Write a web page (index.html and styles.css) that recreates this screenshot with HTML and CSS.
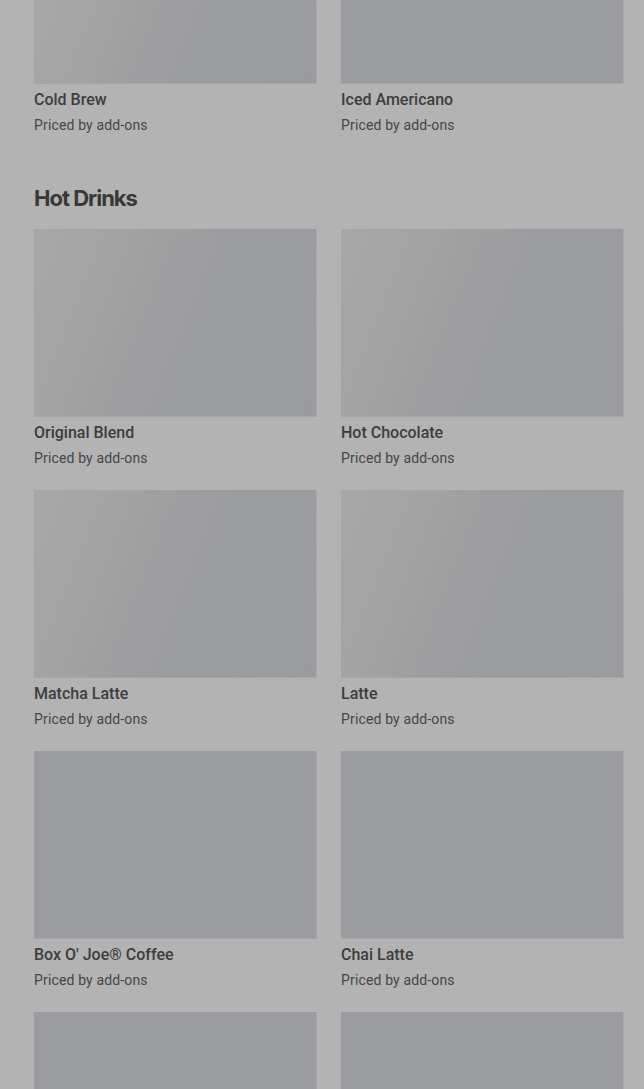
FILE: index.html
```html
<!DOCTYPE html>
<html lang="en">
  <head>
    <meta charset="UTF-8" />
    <meta name="viewport" content="width=device-width,initial-scale=1.0" />
    <title>Menu</title>
    <link rel="stylesheet" href="styles.css">
  </head>
  <body>
    <div class="menu">
      <section class="category">
        <div class="item-grid">
          <div class="item">
            <div class="item-img item-img--cut shimmer"></div>
            <h3>Cold Brew</h3>
            <p>Priced by add-ons</p>
          </div>
          <div class="item">
            <div class="item-img item-img--cut"></div>
            <h3>Iced Americano</h3>
            <p>Priced by add-ons</p>
          </div>
        </div>
      </section>
      <section class="category">
        <h2>Hot Drinks</h2>
        <div class="item-grid">
          <div class="item">
            <div class="item-img shimmer"></div>
            <h3>Original Blend</h3>
            <p>Priced by add-ons</p>
          </div>
          <div class="item">
            <div class="item-img shimmer"></div>
            <h3>Hot Chocolate</h3>
            <p>Priced by add-ons</p>
          </div>
          <div class="item">
            <div class="item-img shimmer"></div>
            <h3>Matcha Latte</h3>
            <p>Priced by add-ons</p>
          </div>
          <div class="item">
            <div class="item-img shimmer"></div>
            <h3>Latte</h3>
            <p>Priced by add-ons</p>
          </div>
          <div class="item">
            <div class="item-img"></div>
            <h3>Box O' Joe® Coffee</h3>
            <p>Priced by add-ons</p>
          </div>
          <div class="item">
            <div class="item-img"></div>
            <h3>Chai Latte</h3>
            <p>Priced by add-ons</p>
          </div>
          <div class="item">
            <div class="item-img"></div>
          </div>
          <div class="item">
            <div class="item-img"></div>
          </div>
        </div>
      </section>
    </div>
  </body>
</html>
```

FILE: styles.css
```css
* {
  margin: 0;
  padding: 0;
  box-sizing: border-box;
}
html, body {
  font-family: Roboto, "Liberation Sans", sans-serif;
  background: #b3b3b3;
  color: #353535;
  overflow: hidden;
}
.menu {
  padding: 0 20px 0 34px;
}
.category h2 {
  font-family: Inter, "Liberation Sans", sans-serif;
  font-size: 22px;
  line-height: 28px;
  font-weight: 700;
  letter-spacing: -1px;
  color: #383838;
  margin: 49px 0 17px;
}
.item-grid {
  display: grid;
  grid-template-columns: 1fr 1fr;
  column-gap: 24px;
  row-gap: 22px;
}
.item-img {
  height: 188px;
  background: #9b9ca0;
  border-right: 1px solid #a8a8a8;
  border-bottom: 1px solid #a6a6a6;
}
.item-img--cut {
  height: 84px;
}
.shimmer {
  background: linear-gradient(112deg, #a7a7a7 0%, #a3a3a3 25%, #9e9ea0 42%, #9b9ca0 60%, #9a9b9f 100%);
}
.item h3 {
  font-size: 16px;
  line-height: 24px;
  font-weight: 500;
  color: #3d3d3d;
  margin-top: 4px;
}
.item p {
  font-size: 14px;
  line-height: 20px;
  letter-spacing: 0.15px;
  color: #464646;
  margin-top: 3px;
}
```
